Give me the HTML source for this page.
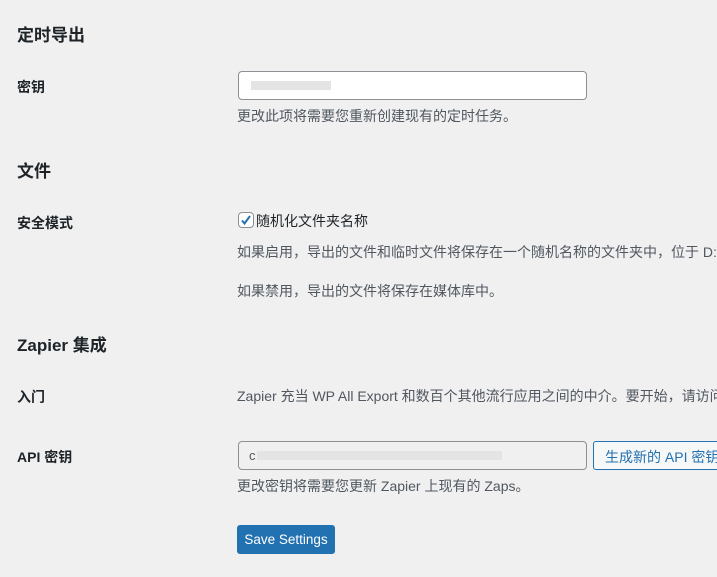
<html><head><style>
body{margin:0;width:717px;height:577px;background:#f0f0f1;font-family:"Liberation Sans","Noto Sans CJK SC",sans-serif;color:#1d2327;overflow:hidden;position:relative}
div,span{position:absolute;white-space:nowrap}
.h{font-size:17px;font-weight:bold;left:17px}
.l{font-size:14px;font-weight:bold;left:17px}
.d{font-size:14px;color:#50575e;left:237px}
.in{left:238px;width:347px;height:27px;border:1px solid #8c8f94;border-radius:4px;background:#fff}
.blur{background:#e4e4e4;height:9px}
</style></head><body>
<div class="h" style="top:21px">定时导出</div>
<div class="l" style="top:77px">密钥</div>
<div class="in" style="top:71px"><span class="blur" style="left:12px;top:9px;width:80px"></span></div>
<div class="d" style="top:106px">更改此项将需要您重新创建现有的定时任务。</div>
<div class="h" style="top:157px">文件</div>
<div class="l" style="top:213px">安全模式</div>
<div style="left:238px;top:212px;width:14px;height:14px;border:1px solid #8c8f94;border-radius:4px;background:#fff"><svg width="14" height="14" viewBox="0 0 14 14" style="position:absolute;left:0;top:0"><path d="M3 7.5l2.5 3L11 3" stroke="#2271b1" stroke-width="2" fill="none"/></svg></div>
<div style="left:256px;top:211px;font-size:14px">随机化文件夹名称</div>
<div class="d" style="top:242px">如果启用，导出的文件和临时文件将保存在一个随机名称的文件夹中，位于 D:\</div>
<div class="d" style="top:281px">如果禁用，导出的文件将保存在媒体库中。</div>
<div class="h" style="top:331px">Zapier 集成</div>
<div class="l" style="top:387px">入门</div>
<div class="d" style="top:386px">Zapier 充当 WP All Export 和数百个其他流行应用之间的中介。要开始，请访问</div>
<div class="l" style="top:447px">API 密钥</div>
<div class="in" style="top:441px;background:#f0f0f1"><span style="left:10px;top:6px;font-size:13px;color:#50575e">c</span><span class="blur" style="left:18px;top:9px;width:245px"></span></div>
<div style="left:593px;top:441px;width:140px;height:27px;border:1px solid #2271b1;border-radius:3px;background:#f6f7f7;color:#2271b1;font-size:14px"><span style="left:11px;top:5px">生成新的 API 密钥</span></div>
<div class="d" style="top:476px">更改密钥将需要您更新 Zapier 上现有的 Zaps。</div>
<div style="left:237px;top:525px;width:98px;height:29px;background:#2271b1;border-radius:3px;color:#fff;font-size:13.5px;text-align:center;line-height:29px">Save Settings</div>
</body></html>
